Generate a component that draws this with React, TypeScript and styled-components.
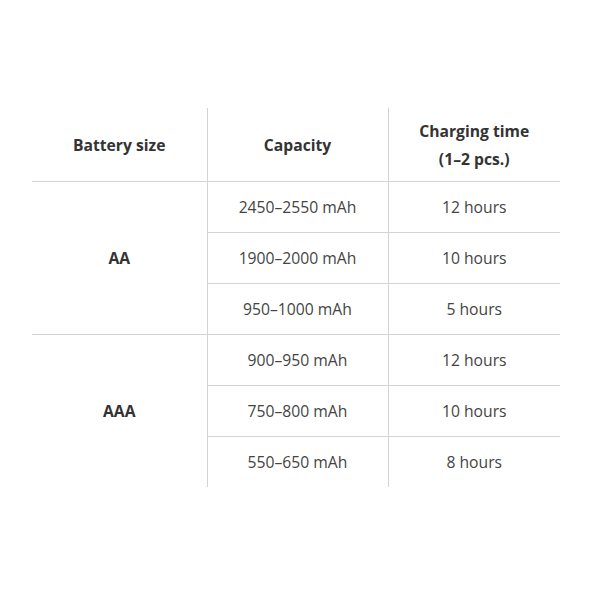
import styled, {createGlobalStyle} from "styled-components";

const GlobalStyle = createGlobalStyle`
  html, body {
    margin: 0;
    padding: 0;
    background: #ffffff;
  }
  body {
    font-family: "Open Sans", "Noto Sans", sans-serif;
  }
`;

type Group = {
    size: string;
    rows: { capacity: string; time: string }[];
};

const groups: Group[] = [
    {
        size: "AA",
        rows: [
            {capacity: "2450–2550 mAh", time: "12 hours"},
            {capacity: "1900–2000 mAh", time: "10 hours"},
            {capacity: "950–1000 mAh", time: "5 hours"},
        ],
    },
    {
        size: "AAA",
        rows: [
            {capacity: "900–950 mAh", time: "12 hours"},
            {capacity: "750–800 mAh", time: "10 hours"},
            {capacity: "550–650 mAh", time: "8 hours"},
        ],
    },
];

export default function App() {
    return (
        <Page>
            <GlobalStyle/>
            <Table>
                <colgroup>
                    <col style={{width: 175}}/>
                    <col style={{width: 181}}/>
                    <col style={{width: 172}}/>
                </colgroup>
                <thead>
                <tr>
                    <Head>Battery size</Head>
                    <Head>Capacity</Head>
                    <Head>Charging time<br/>(1–2 pcs.)</Head>
                </tr>
                </thead>
                <tbody>
                {groups.map((group, g) =>
                    group.rows.map((row, i) => (
                        <Row key={group.size + i}>
                            {i === 0 && (
                                <SizeCell
                                    rowSpan={group.rows.length}
                                    $last={g === groups.length - 1}
                                >
                                    {group.size}
                                </SizeCell>
                            )}
                            <Cell>{row.capacity}</Cell>
                            <Cell>{row.time}</Cell>
                        </Row>
                    ))
                )}
                </tbody>
            </Table>
        </Page>
    );
}

const Page = styled.div`
  width: 600px;
  height: 601px;
  padding: 108px 0 0 32px;
  box-sizing: border-box;
`;

const Table = styled.table`
  width: 528px;
  border-collapse: collapse;
  table-layout: fixed;
  font-size: 15.7px;
  text-align: center;
`;

const Head = styled.th`
  height: 73px;
  padding: 0;
  line-height: 28px;
  font-weight: 700;
  color: #333333;
  border-bottom: 1px solid #d3d3d3;
  & + & {
    border-left: 1px solid #d3d3d3;
  }
`;

const Row = styled.tr`
  &:last-child td {
    border-bottom: none;
  }
`;

const Cell = styled.td`
  height: 50px;
  padding: 0;
  color: #444444;
  border-left: 1px solid #d3d3d3;
  border-bottom: 1px solid #d3d3d3;
`;

const SizeCell = styled.td<{ $last: boolean }>`
  padding: 0;
  font-weight: 700;
  color: #333333;
  border-bottom: ${(p) => (p.$last ? "none" : "1px solid #d3d3d3")};
`;
